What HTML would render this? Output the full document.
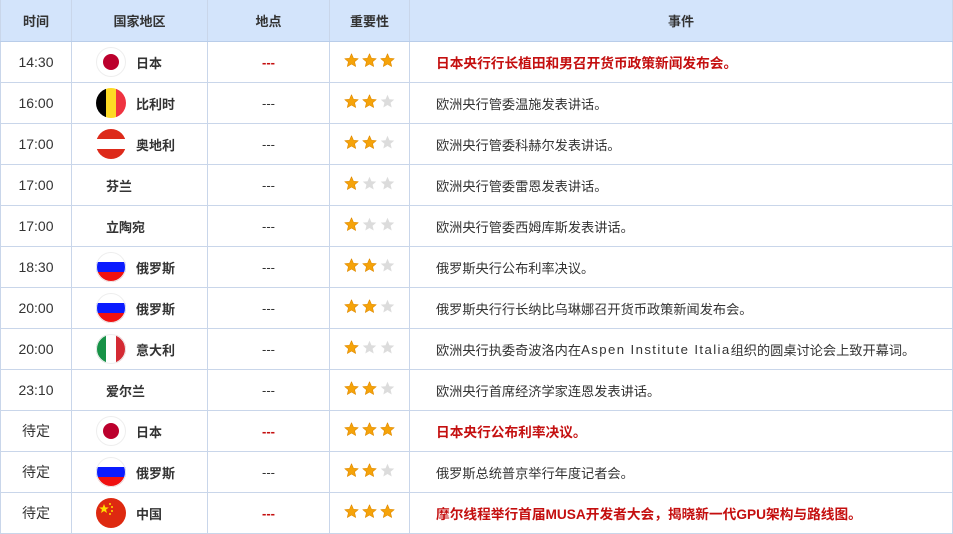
<!DOCTYPE html>
<html><head><meta charset="utf-8"><style>
*{margin:0;padding:0;box-sizing:border-box}
body{width:953px;height:534px;overflow:hidden;background:#fff;font-family:"Liberation Sans","Noto Sans CJK SC",sans-serif;font-size:13px;color:#333;position:relative}
.row{position:absolute;left:0;width:953px;height:41px;border-bottom:1px solid #c9d6ea}
.hd{top:0;height:42px;background:#d3e4fb;font-weight:bold;color:#333;border-bottom:1px solid #b9cde9}
.c{position:absolute;top:0;height:100%;display:flex;align-items:center;border-right:1px solid #c9d6ea}
.c1{left:0;width:72px;justify-content:center;border-left:1px solid #c9d6ea;font-size:14px}
.c2{left:72px;width:136px}
.c3{left:208px;width:122px;justify-content:center}
.c4{left:330px;width:80px;justify-content:center}
.c5{left:410px;width:543px;padding-left:26px;border-right:1px solid #c9d6ea;font-size:13.2px}
.hd .c1,.hd .c5{font-size:13px}
.hd .c2,.hd .c5{justify-content:center;padding-left:0}
.flag{position:absolute;left:24px;top:5px;width:30px;height:30px}
.nm{position:absolute;left:64px;font-weight:bold}
.nf{position:absolute;left:34px;font-weight:bold}
.st{display:flex;gap:3px;margin-top:-4px}
.c5.red{color:#c40f0f;font-weight:bold;font-size:13.7px}
.dr{color:#c40f0f;font-weight:bold}
.lt{letter-spacing:1.4px}
</style></head><body>
<svg width="0" height="0" style="position:absolute"><defs>
<clipPath id="k"><circle cx="15" cy="15" r="15"/></clipPath>
<symbol id="sy" viewBox="0 0 20 20"><path d="M10 1 L12.6 7 L19 7.5 L14.1 11.7 L15.6 18 L10 14.6 L4.4 18 L5.9 11.7 L1 7.5 L7.4 7 Z" fill="#f5a30a" stroke="#e08a00" stroke-width=".8" stroke-linejoin="round"/></symbol>
<symbol id="sg" viewBox="0 0 20 20"><path d="M10 1 L12.6 7 L19 7.5 L14.1 11.7 L15.6 18 L10 14.6 L4.4 18 L5.9 11.7 L1 7.5 L7.4 7 Z" fill="#dcdcdc" stroke-linejoin="round"/></symbol>
</defs></svg>

<div class="row hd"><div class="c c1">时间</div><div class="c c2">国家地区</div><div class="c c3">地点</div><div class="c c4">重要性</div><div class="c c5">事件</div></div>

<div class="row" style="top:42px"><div class="c c1">14:30</div><div class="c c2"><svg class="flag" viewBox="0 0 30 30"><circle cx="15" cy="15" r="14.5" fill="#fff" stroke="#eee"/><circle cx="15" cy="15" r="8" fill="#bc002d"/></svg><span class="nm">日本</span></div><div class="c c3 dr">---</div><div class="c c4"><span class="st"><svg width="15" height="15"><use href="#sy"/></svg><svg width="15" height="15"><use href="#sy"/></svg><svg width="15" height="15"><use href="#sy"/></svg></span></div><div class="c c5 red">日本央行行长植田和男召开货币政策新闻发布会。</div></div>

<div class="row" style="top:83px"><div class="c c1">16:00</div><div class="c c2"><svg class="flag" viewBox="0 0 30 30"><g clip-path="url(#k)"><rect width="10" height="30" fill="#000"/><rect x="10" width="10" height="30" fill="#fdda24"/><rect x="20" width="10" height="30" fill="#ef3340"/></g></svg><span class="nm">比利时</span></div><div class="c c3">---</div><div class="c c4"><span class="st"><svg width="15" height="15"><use href="#sy"/></svg><svg width="15" height="15"><use href="#sy"/></svg><svg width="15" height="15"><use href="#sg"/></svg></span></div><div class="c c5">欧洲央行管委温施发表讲话。</div></div>

<div class="row" style="top:124px"><div class="c c1">17:00</div><div class="c c2"><svg class="flag" viewBox="0 0 30 30"><g clip-path="url(#k)"><rect width="30" height="10" fill="#dd2a1a"/><rect y="10" width="30" height="10" fill="#fff"/><rect y="20" width="30" height="10" fill="#dd2a1a"/></g></svg><span class="nm">奥地利</span></div><div class="c c3">---</div><div class="c c4"><span class="st"><svg width="15" height="15"><use href="#sy"/></svg><svg width="15" height="15"><use href="#sy"/></svg><svg width="15" height="15"><use href="#sg"/></svg></span></div><div class="c c5">欧洲央行管委科赫尔发表讲话。</div></div>

<div class="row" style="top:165px"><div class="c c1">17:00</div><div class="c c2"><span class="nf">芬兰</span></div><div class="c c3">---</div><div class="c c4"><span class="st"><svg width="15" height="15"><use href="#sy"/></svg><svg width="15" height="15"><use href="#sg"/></svg><svg width="15" height="15"><use href="#sg"/></svg></span></div><div class="c c5">欧洲央行管委雷恩发表讲话。</div></div>

<div class="row" style="top:206px"><div class="c c1">17:00</div><div class="c c2"><span class="nf">立陶宛</span></div><div class="c c3">---</div><div class="c c4"><span class="st"><svg width="15" height="15"><use href="#sy"/></svg><svg width="15" height="15"><use href="#sg"/></svg><svg width="15" height="15"><use href="#sg"/></svg></span></div><div class="c c5">欧洲央行管委西姆库斯发表讲话。</div></div>

<div class="row" style="top:247px"><div class="c c1">18:30</div><div class="c c2"><svg class="flag" viewBox="0 0 30 30"><g clip-path="url(#k)"><rect width="30" height="10" fill="#fff"/><rect y="10" width="30" height="10" fill="#0a1bff"/><rect y="20" width="30" height="10" fill="#f01010"/></g><circle cx="15" cy="15" r="14.5" fill="none" stroke="#eee"/></svg><span class="nm">俄罗斯</span></div><div class="c c3">---</div><div class="c c4"><span class="st"><svg width="15" height="15"><use href="#sy"/></svg><svg width="15" height="15"><use href="#sy"/></svg><svg width="15" height="15"><use href="#sg"/></svg></span></div><div class="c c5">俄罗斯央行公布利率决议。</div></div>

<div class="row" style="top:288px"><div class="c c1">20:00</div><div class="c c2"><svg class="flag" viewBox="0 0 30 30"><g clip-path="url(#k)"><rect width="30" height="10" fill="#fff"/><rect y="10" width="30" height="10" fill="#0a1bff"/><rect y="20" width="30" height="10" fill="#f01010"/></g><circle cx="15" cy="15" r="14.5" fill="none" stroke="#eee"/></svg><span class="nm">俄罗斯</span></div><div class="c c3">---</div><div class="c c4"><span class="st"><svg width="15" height="15"><use href="#sy"/></svg><svg width="15" height="15"><use href="#sy"/></svg><svg width="15" height="15"><use href="#sg"/></svg></span></div><div class="c c5">俄罗斯央行行长纳比乌琳娜召开货币政策新闻发布会。</div></div>

<div class="row" style="top:329px"><div class="c c1">20:00</div><div class="c c2"><svg class="flag" viewBox="0 0 30 30"><g clip-path="url(#k)"><rect width="10" height="30" fill="#179247"/><rect x="10" width="10" height="30" fill="#fff"/><rect x="20" width="10" height="30" fill="#d42a33"/></g><circle cx="15" cy="15" r="14.5" fill="none" stroke="#eee"/></svg><span class="nm">意大利</span></div><div class="c c3">---</div><div class="c c4"><span class="st"><svg width="15" height="15"><use href="#sy"/></svg><svg width="15" height="15"><use href="#sg"/></svg><svg width="15" height="15"><use href="#sg"/></svg></span></div><div class="c c5">欧洲央行执委奇波洛内在<span class="lt">Aspen Institute Italia</span>组织的圆桌讨论会上致开幕词。</div></div>

<div class="row" style="top:370px"><div class="c c1">23:10</div><div class="c c2"><span class="nf">爱尔兰</span></div><div class="c c3">---</div><div class="c c4"><span class="st"><svg width="15" height="15"><use href="#sy"/></svg><svg width="15" height="15"><use href="#sy"/></svg><svg width="15" height="15"><use href="#sg"/></svg></span></div><div class="c c5">欧洲央行首席经济学家连恩发表讲话。</div></div>

<div class="row" style="top:411px"><div class="c c1">待定</div><div class="c c2"><svg class="flag" viewBox="0 0 30 30"><circle cx="15" cy="15" r="14.5" fill="#fff" stroke="#eee"/><circle cx="15" cy="15" r="8" fill="#bc002d"/></svg><span class="nm">日本</span></div><div class="c c3 dr">---</div><div class="c c4"><span class="st"><svg width="15" height="15"><use href="#sy"/></svg><svg width="15" height="15"><use href="#sy"/></svg><svg width="15" height="15"><use href="#sy"/></svg></span></div><div class="c c5 red">日本央行公布利率决议。</div></div>

<div class="row" style="top:452px"><div class="c c1">待定</div><div class="c c2"><svg class="flag" viewBox="0 0 30 30"><g clip-path="url(#k)"><rect width="30" height="10" fill="#fff"/><rect y="10" width="30" height="10" fill="#0a1bff"/><rect y="20" width="30" height="10" fill="#f01010"/></g><circle cx="15" cy="15" r="14.5" fill="none" stroke="#eee"/></svg><span class="nm">俄罗斯</span></div><div class="c c3">---</div><div class="c c4"><span class="st"><svg width="15" height="15"><use href="#sy"/></svg><svg width="15" height="15"><use href="#sy"/></svg><svg width="15" height="15"><use href="#sg"/></svg></span></div><div class="c c5">俄罗斯总统普京举行年度记者会。</div></div>

<div class="row" style="top:493px"><div class="c c1">待定</div><div class="c c2"><svg class="flag" viewBox="0 0 30 30"><circle cx="15" cy="15" r="15" fill="#de2910"/><path d="M8 6 L9.3 9.4 L12.8 9.5 L10 11.6 L11 15 L8 13 L5 15 L6 11.6 L3.2 9.5 L6.7 9.4 Z" fill="#ffde00"/><circle cx="14" cy="6" r="1" fill="#ffde00"/><circle cx="16" cy="9" r="1" fill="#ffde00"/><circle cx="16" cy="13" r="1" fill="#ffde00"/><circle cx="14" cy="16" r="1" fill="#ffde00"/></svg><span class="nm">中国</span></div><div class="c c3 dr">---</div><div class="c c4"><span class="st"><svg width="15" height="15"><use href="#sy"/></svg><svg width="15" height="15"><use href="#sy"/></svg><svg width="15" height="15"><use href="#sy"/></svg></span></div><div class="c c5 red">摩尔线程举行首届MUSA开发者大会，揭晓新一代GPU架构与路线图。</div></div>
</body></html>
